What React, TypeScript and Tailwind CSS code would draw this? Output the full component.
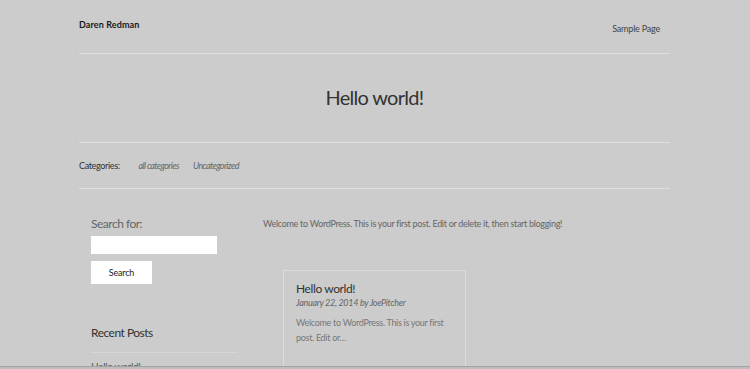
export default function App() {
  const font = { fontFamily: 'Lato, "Open Sans", sans-serif' }
  return (
    <div className="w-[750px] h-[369px] flex flex-col bg-[#cccccc] overflow-hidden" style={font}>
      <div className="h-[366px] overflow-hidden">
        <div className="w-[591px] ml-[79px]">
          {/* Header */}
          <header className="h-[54px] flex justify-between border-b border-[#dedede]">
            <a className="pt-[19px] text-[9px] font-bold text-[#1a1a1a] leading-[12px] tracking-[0.1px]">Daren Redman</a>
            <nav className="pt-[23px] pr-[10px] text-[9px] text-[#444] leading-[12px] tracking-[-0.2px]">Sample Page</nav>
          </header>

          {/* Title */}
          <div className="h-[89px] flex items-center justify-center border-b border-[#dedede]">
            <h1 className="text-[20px] text-[#333] leading-[24px] pb-[2px] tracking-[-0.7px]">Hello world!</h1>
          </div>

          {/* Categories */}
          <div className="h-[46px] flex items-center gap-[19px] border-b border-[#dedede] text-[9px] leading-[12px] tracking-[-0.35px]">
            <span className="text-[#333]">Categories:</span>
            <div className="flex gap-[14px] italic text-[#666] tracking-[-0.6px]">
              <span>all categories</span>
              <span>Uncategorized</span>
            </div>
          </div>

          {/* Body */}
          <div className="flex pt-[27px]">
            <aside className="w-[184px] pl-[12px] shrink-0">
              <p className="text-[12px] text-[#666] leading-[16px] tracking-[-0.5px]">Search for:</p>
              <div className="mt-[4px] w-[126px] h-[18px] bg-white" />
              <button className="mt-[7px] w-[61px] h-[23px] bg-white text-[9px] text-[#222] tracking-[-0.2px]">Search</button>
              <h3 className="mt-[41px] text-[12px] text-[#333] leading-[16px] tracking-[-0.5px]">Recent Posts</h3>
              <div className="mt-[11px] w-[147px] border-t border-[#d6d6d6]" />
              <p className="mt-[7px] text-[10px] text-[#555] leading-[12px] tracking-[-0.3px]">Hello world!</p>
            </aside>
            <main className="flex-1">
              <p className="text-[9px] text-[#666] leading-[12px] pt-[2px] tracking-[-0.3px]">
                Welcome to WordPress. This is your first post. Edit or delete it, then start blogging!
              </p>
              <div className="mt-[40px] ml-[20px] w-[183px] h-[120px] border border-[#dcdcdc] px-[12px] pt-[11px]">
                <h2 className="text-[12px] text-[#333] leading-[14px] tracking-[-0.4px]">Hello world!</h2>
                <p className="text-[9px] italic text-[#666] leading-[14px] tracking-[-0.3px]">January 22, 2014 by JoePitcher</p>
                <p className="mt-[5px] text-[9px] text-[#777] leading-[15px] tracking-[-0.3px]">
                  Welcome to WordPress. This is your first post. Edit or…
                </p>
              </div>
            </main>
          </div>
        </div>
      </div>
      <div className="h-[3px] border-t border-[#a3a3a3] bg-[#bdbdbd]" />
    </div>
  )
}
